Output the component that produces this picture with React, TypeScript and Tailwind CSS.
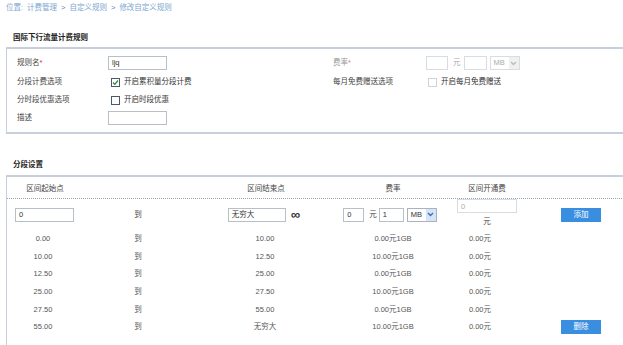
import React from 'react';

const font = { fontFamily: '"Liberation Sans", "Noto Sans CJK SC", sans-serif' };

function TextBox({ w, value, disabled }: { w: string; value?: string; disabled?: boolean }) {
    return (
        <div
            className={`${w} flex h-[14px] items-center border px-[3px] text-[7.5px] ${
                disabled ? 'border-[#d8dde3] text-[#aaa]' : 'border-[#b9bfc6] text-[#333]'
            }`}
        >
            {value}
        </div>
    );
}

function Select({ disabled }: { disabled?: boolean }) {
    return (
        <div
            className={`flex h-[14px] w-[30px] items-center justify-between border pl-[3px] text-[7.5px] ${
                disabled ? 'border-[#d8dde3] text-[#aaa]' : 'border-[#a9b3c0] text-[#333]'
            }`}
        >
            <span>MB</span>
            <span
                className={`flex h-[12px] w-[10px] items-center justify-center ${
                    disabled ? 'bg-[#f0f0f0]' : 'bg-[#d6e4f5]'
                }`}
            >
                <svg width="7" height="5" viewBox="0 0 7 5">
                    <path d="M1 1 L3.5 3.5 L6 1" fill="none" stroke={disabled ? '#bbb' : '#3b6fb6'} strokeWidth="1.4" />
                </svg>
            </span>
        </div>
    );
}

function CheckBox({ checked, disabled }: { checked?: boolean; disabled?: boolean }) {
    return (
        <div
            className={`flex h-[9px] w-[9px] items-center justify-center border bg-white ${
                disabled ? 'border-[#cfd3d8]' : 'border-[#4a5a6e]'
            }`}
        >
            {checked && (
                <svg width="7" height="7" viewBox="0 0 7 7">
                    <path d="M1 3.5 L2.8 5.3 L6 1.5" fill="none" stroke="#2f8a3c" strokeWidth="1.3" />
                </svg>
            )}
        </div>
    );
}

const rows = [
    { start: '0.00', end: '10.00', rate: '0.00元1GB', fee: '0.00元' },
    { start: '10.00', end: '12.50', rate: '10.00元1GB', fee: '0.00元' },
    { start: '12.50', end: '25.00', rate: '0.00元1GB', fee: '0.00元' },
    { start: '25.00', end: '27.50', rate: '10.00元1GB', fee: '0.00元' },
    { start: '27.50', end: '55.00', rate: '0.00元1GB', fee: '0.00元' },
    { start: '55.00', end: '无穷大', rate: '10.00元1GB', fee: '0.00元', del: true },
];

const cols = 'grid grid-cols-[74px_114px_142px_112px_76px_1fr]';

export default function App() {
    return (
        <div className="h-[345px] w-[623px] overflow-hidden bg-white text-[7.5px] text-[#555]" style={font}>
            <div className="flex h-[16px] items-center gap-[4px] pl-[6px] text-[7.5px] text-[#7ca7cf]">
                <span>位置:</span>
                <span>计费管理</span>
                <span className="text-[#5a82aa]">&gt;</span>
                <span>自定义规则</span>
                <span className="text-[#5a82aa]">&gt;</span>
                <span>修改自定义规则</span>
            </div>

            <div className="mt-[16px] flex h-[12px] items-center pl-[13px] text-[7.5px] font-bold text-[#222]">
                国际下行流量计费规则
            </div>

            <div className="mt-[3px] ml-[6px] w-[620px] border-t-2 border-b-2 border-l border-[#c6cfda] pt-[4px] pb-[5px] pl-[10px]">
                <div className="grid grid-cols-[91px_225px_93px_1fr]">
                    <div className="flex h-[20px] items-center text-[#444]">
                        规则名<span className="text-[#e03030]">*</span>
                    </div>
                    <div className="flex h-[20px] items-center">
                        <TextBox w="w-[59px]" value="ljq" />
                    </div>
                    <div className="flex h-[20px] items-center text-[#999]">
                        费率<span className="text-[#e08080]">*</span>
                    </div>
                    <div className="flex h-[20px] items-center gap-[5px]">
                        <TextBox w="w-[22px]" disabled />
                        <span className="text-[#aaa]">元</span>
                        <div className="-ml-[2px] flex items-center gap-[3px]">
                            <TextBox w="w-[23px]" disabled />
                            <Select disabled />
                        </div>
                    </div>

                    <div className="flex h-[18px] items-center text-[#444]">分段计费选项</div>
                    <div className="flex h-[18px] items-center gap-[4px] pl-[3px] text-[#333]">
                        <CheckBox checked />
                        <span>开启累积量分段计费</span>
                    </div>
                    <div className="flex h-[18px] items-center text-[#444]">每月免费赠送选项</div>
                    <div className="flex h-[18px] items-center gap-[4px] pl-[2px] text-[#333]">
                        <CheckBox disabled />
                        <span>开启每月免费赠送</span>
                    </div>

                    <div className="flex h-[18px] items-center text-[#444]">分时段优惠选项</div>
                    <div className="flex h-[18px] items-center gap-[4px] pl-[3px] text-[#333]">
                        <CheckBox />
                        <span>开启时段优惠</span>
                    </div>
                    <div />
                    <div />

                    <div className="flex h-[18px] items-center text-[#444]">描述</div>
                    <div className="flex h-[18px] items-center">
                        <TextBox w="w-[59px]" />
                    </div>
                    <div />
                    <div />
                </div>
            </div>

            <div className="mt-[25px] flex h-[12px] items-center pl-[13px] text-[7.5px] font-bold text-[#222]">
                分段设置
            </div>

            <div className="mt-[4px] ml-[6px] w-[620px] border-t-2 border-l border-[#c6cfda] pb-[40px]">
                <div className={`${cols} h-[22px] items-end border-b border-dotted border-[#9aa6b4] pb-[4px] text-center text-[#444]`}>
                    <div className="pl-[2px]">区间起始点</div>
                    <div />
                    <div>区间结束点</div>
                    <div>费率</div>
                    <div>区间开通费</div>
                    <div />
                </div>

                <div className={`${cols} h-[31px] items-center text-center`}>
                    <div className="flex justify-center pl-[1px]">
                        <TextBox w="w-[59px]" value="0" />
                    </div>
                    <div className="text-[#444]">到</div>
                    <div className="flex items-center justify-center gap-[5px] pr-[4px]">
                        <TextBox w="w-[58px]" value="无穷大" />
                        <span className="text-[13px] leading-none font-bold text-[#333]">∞</span>
                    </div>
                    <div className="flex items-center justify-center gap-[5px] pr-[6px]">
                        <TextBox w="w-[21px]" value="0" />
                        <span className="text-[#444]">元</span>
                        <div className="-ml-[3px] flex items-center gap-[3px]">
                            <TextBox w="w-[25px]" value="1" />
                            <Select />
                        </div>
                    </div>
                    <div className="flex flex-col items-center gap-[3px] pb-[2px]">
                        <TextBox w="w-[60px]" value="0" disabled />
                        <span className="text-[#444]">元</span>
                    </div>
                    <div className="flex pl-[36px]">
                        <button className="h-[14px] w-[40px] bg-[#3a8ee0] text-[7.5px] text-white">添加</button>
                    </div>
                </div>

                {rows.map((r) => (
                    <div key={r.start} className={`${cols} h-[17.6px] items-center text-center text-[#555]`}>
                        <div className="pr-[2px]">{r.start}</div>
                        <div>到</div>
                        <div className="pr-[2px]">{r.end}</div>
                        <div>{r.rate}</div>
                        <div className="pr-[14px]">{r.fee}</div>
                        <div className="flex pl-[36px]">
                            {r.del && (
                                <button className="h-[14px] w-[40px] bg-[#3a8ee0] text-[7.5px] text-white">删除</button>
                            )}
                        </div>
                    </div>
                ))}
            </div>
        </div>
    );
}
